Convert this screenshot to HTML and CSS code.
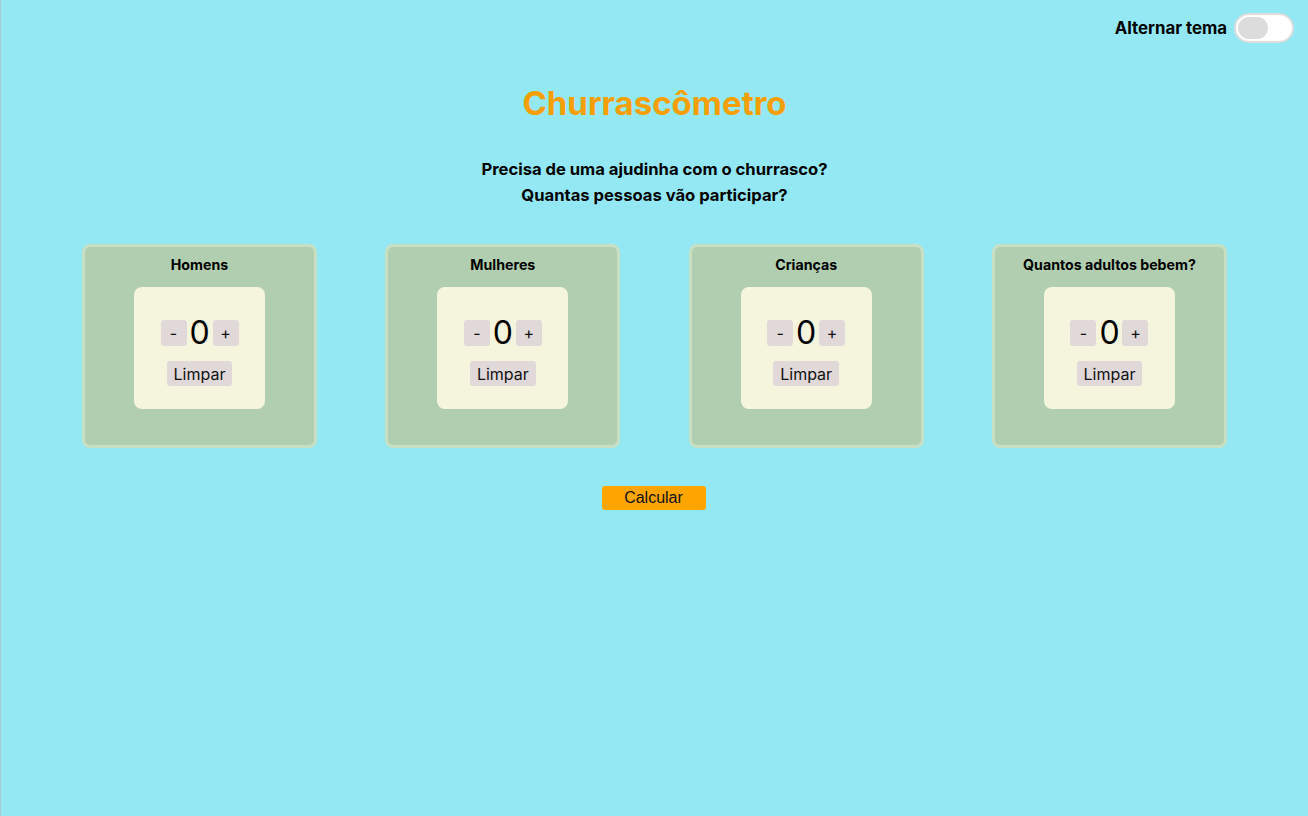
FILE: index.html
```html
<!DOCTYPE html>
<html lang="pt-BR">
<head>
<meta charset="utf-8">
<title>Churrascômetro</title>
<link rel="stylesheet" href="styles.css">
</head>
<body>
<div class="page">
  <header class="topbar">
    <span class="theme-label">Alternar tema</span>
    <span class="switch"><span class="knob"></span></span>
  </header>
  <h1 class="title">Churrascômetro</h1>
  <div class="intro">
    <p>Precisa de uma ajudinha com o churrasco?</p>
    <p>Quantas pessoas vão participar?</p>
  </div>
  <section class="cards">
    <div class="card">
      <h2 class="card-title">Homens</h2>
      <div class="counter">
        <div class="row"><button class="btn small">-</button><span class="num">0</span><button class="btn small">+</button></div>
        <button class="btn clear">Limpar</button>
      </div>
    </div>
    <div class="card">
      <h2 class="card-title">Mulheres</h2>
      <div class="counter">
        <div class="row"><button class="btn small">-</button><span class="num">0</span><button class="btn small">+</button></div>
        <button class="btn clear">Limpar</button>
      </div>
    </div>
    <div class="card">
      <h2 class="card-title">Crianças</h2>
      <div class="counter">
        <div class="row"><button class="btn small">-</button><span class="num">0</span><button class="btn small">+</button></div>
        <button class="btn clear">Limpar</button>
      </div>
    </div>
    <div class="card">
      <h2 class="card-title">Quantos adultos bebem?</h2>
      <div class="counter">
        <div class="row"><button class="btn small">-</button><span class="num">0</span><button class="btn small">+</button></div>
        <button class="btn clear">Limpar</button>
      </div>
    </div>
  </section>
  <div class="actions"><button class="calc">Calcular</button></div>
</div>
</body>
</html>
```
FILE: styles.css
```css
* { box-sizing: border-box; }
html, body { margin: 0; padding: 0; height: 100%; }
body {
  background: #93e8f3;
  font-family: Inter, "Liberation Sans", sans-serif;
  color: #000;
}
.page {
  min-height: 816px;
  border-left: 1px solid #a9c7cc;
}
.topbar {
  display: flex;
  justify-content: flex-end;
  align-items: center;
  gap: 7px;
  padding: 13px 14px 0 0;
  height: 43px;
}
.theme-label { font-weight: 700; font-size: 16.8px; }
.switch {
  width: 60px;
  height: 30px;
  border-radius: 15px;
  background: #fff;
  border: 2px solid #ddd;
  padding: 2px;
  display: flex;
  align-items: center;
}
.knob {
  width: 30px;
  height: 22px;
  border-radius: 11px;
  background: #dcdcdc;
}
.title {
  margin: 41px 0 0;
  text-align: center;
  color: #f5a000;
  font-size: 33px;
  font-weight: 700;
  line-height: 38px;
}
.intro {
  margin-top: 34px;
  text-align: center;
  font-weight: 700;
  font-size: 16.6px;
}
.intro p { margin: 0; line-height: 26px; }
.cards {
  display: flex;
  justify-content: space-between;
  padding: 0 81px;
  margin-top: 36px;
}
.card {
  width: 235px;
  height: 204px;
  background: #b2ceb0;
  border: 3px solid #c7e0c4;
  border-radius: 8px;
  display: flex;
  flex-direction: column;
  align-items: center;
}
.card-title {
  margin: 9px 0 0;
  font-size: 14.2px;
  font-weight: 700;
  line-height: 17px;
}
.counter {
  margin-top: 14px;
  width: 131px;
  height: 122px;
  background: #f5f5dd;
  border-radius: 8px;
  display: flex;
  flex-direction: column;
  align-items: center;
  padding-top: 29px;
}
.row { display: flex; align-items: center; gap: 0; }
.btn {
  font-family: Inter, "Liberation Sans", sans-serif;
  background: #e0d8d9;
  border: none;
  border-radius: 3px;
  color: #111;
  padding: 0;
  cursor: pointer;
}
.btn.small { width: 26px; height: 26px; font-size: 16px; }
.num { font-size: 32px; line-height: 34px; width: 26px; text-align: center; }
.btn.clear {
  margin-top: 11px;
  height: 25px;
  padding: 0 7px;
  font-size: 16px;
}
.actions {
  display: flex;
  justify-content: center;
  margin-top: 38px;
}
.calc {
  width: 104px;
  height: 24px;
  background: #ffa500;
  border: none;
  border-radius: 3px;
  font-family: "Liberation Sans", Arial, sans-serif;
  font-size: 16px;
  color: #111;
  padding: 0;
  margin-left: -2px;
}
```
